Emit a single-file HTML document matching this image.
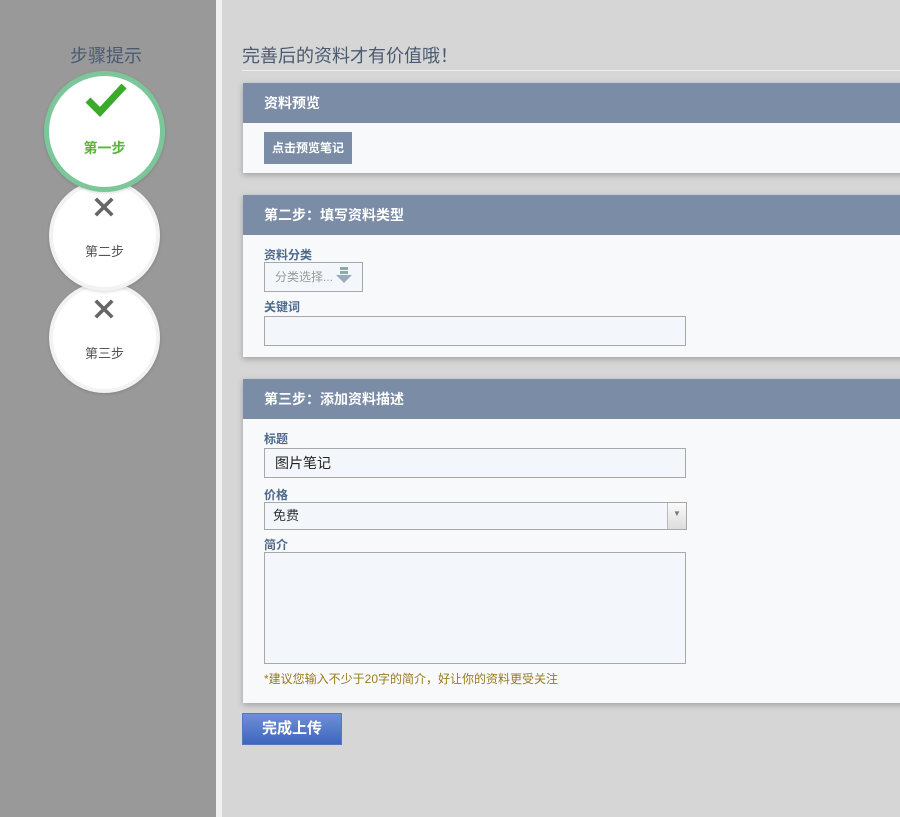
<!DOCTYPE html>
<html><head><meta charset="utf-8"><style>
*{margin:0;padding:0;box-sizing:border-box}
body{width:900px;height:817px;overflow:hidden;background:#d6d6d6;font-family:"Liberation Sans","Noto Sans CJK SC",sans-serif;position:relative}
.side{position:absolute;left:0;top:0;width:216px;height:817px;background:#999}
.strip{position:absolute;left:216px;top:0;width:6px;height:817px;background:#f0f0f0}
.ab{position:absolute}
.circ{position:absolute;border-radius:50%;background:#fff;text-align:center;box-shadow:0 1px 3px rgba(0,0,0,.15)}
.c2{left:49px;width:111px;height:111px;border:4px solid #f2f2f2}
.lbl{position:absolute;width:100%;left:0;font-size:13px;color:#555}
.panel{position:absolute;left:243px;width:680px;background:#f8f9fb;box-shadow:0 2px 6px rgba(0,0,0,.25)}
.ph{height:40px;background:#7a8ca6;color:#fff;font-weight:bold;font-size:14px;line-height:40px;padding-left:21px}
.fl{position:absolute;left:21px;font-size:12px;font-weight:bold;color:#4d6a8a}
.inp{position:absolute;left:21px;width:422px;border:1px solid #a8a8a8;background:#f3f6fa}
</style></head><body>
<div class="side"></div><div class="strip"></div>
<div class="ab" style="left:0;width:212px;top:42px;text-align:center;font-size:18px;color:#4a5a70">步骤提示</div>
<div class="circ c2" style="top:282px"><svg class="ab" style="left:40px;top:12px" width="22" height="22" viewBox="0 0 24 24"><path d="M3 3L21 21M21 3L3 21" stroke="#666" stroke-width="4"/></svg><div class="lbl" style="top:57px">第三步</div></div>
<div class="circ c2" style="top:180px"><svg class="ab" style="left:40px;top:12px" width="22" height="22" viewBox="0 0 24 24"><path d="M3 3L21 21M21 3L3 21" stroke="#666" stroke-width="4"/></svg><div class="lbl" style="top:57px">第二步</div></div>
<div class="circ" style="left:44px;top:71px;width:121px;height:121px;border:5px solid #7cc79a"><svg class="ab" style="left:36px;top:6px" width="42" height="36" viewBox="0 0 42 36"><path d="M3 18L15 30L39 4" stroke="#3aaa2a" stroke-width="7" fill="none"/></svg><div class="lbl" style="top:62px;color:#5ab43a;font-weight:bold;font-size:14px">第一步</div></div>
<div class="ab" style="left:242px;top:42px;font-size:18px;color:#4a5a70">完善后的资料才有价值哦！</div>
<div class="ab" style="left:242px;top:70px;width:658px;height:1px;background:#bbb;border-bottom:1px solid #eee"></div>
<div class="panel" style="top:83px;height:90px"><div class="ph">资料预览</div>
<div class="ab" style="left:21px;top:49px;width:88px;height:32px;background:#7a8ca6;color:#fff;font-size:12px;font-weight:bold;line-height:32px;text-align:center">点击预览笔记</div></div>
<div class="panel" style="top:195px;height:162px"><div class="ph">第二步：填写资料类型</div>
<div class="fl" style="top:51px">资料分类</div>
<div class="ab" style="left:21px;top:67px;width:99px;height:30px;border:1px solid #a8a8a8;background:#f3f6fa;font-size:12px;color:#999;line-height:28px;padding-left:10px">分类选择...<svg class="ab" style="left:70px;top:3px" width="18" height="18" viewBox="0 0 18 18"><rect x="5" y="1" width="8" height="3" fill="#8aa"/><rect x="5" y="5" width="8" height="3" fill="#8aa"/><path d="M1 9H17L9 17Z" fill="#9ab"/></svg></div>
<div class="fl" style="top:103px">关键词</div>
<div class="inp" style="top:121px;height:30px"></div></div>
<div class="panel" style="top:379px;height:324px"><div class="ph">第三步：添加资料描述</div>
<div class="fl" style="top:51px">标题</div>
<div class="inp" style="top:69px;height:30px;font-size:14px;line-height:28px;padding-left:10px;color:#222">图片笔记</div>
<div class="fl" style="top:107px">价格</div>
<div class="inp" style="top:123px;width:423px;height:28px;font-size:13px;line-height:26px;padding-left:8px;color:#333">免费<div class="ab" style="right:0;top:0;width:19px;height:26px;background:linear-gradient(#fafafa,#ddd);border-left:1px solid #bbb;font-size:8px;color:#777;text-align:center;line-height:22px">▼</div></div>
<div class="fl" style="top:157px">简介</div>
<div class="inp" style="top:173px;height:112px"></div>
<div class="ab" style="left:21px;top:291px;font-size:12px;color:#9a7a20">*建议您输入不少于20字的简介，好让你的资料更受关注</div></div>
<div class="ab" style="left:242px;top:713px;width:100px;height:32px;background:linear-gradient(#6f8fd6,#3d66c0);border:1px solid #5577bb;color:#fff;font-size:15px;font-weight:bold;line-height:30px;text-align:center">完成上传</div>
</body></html>
